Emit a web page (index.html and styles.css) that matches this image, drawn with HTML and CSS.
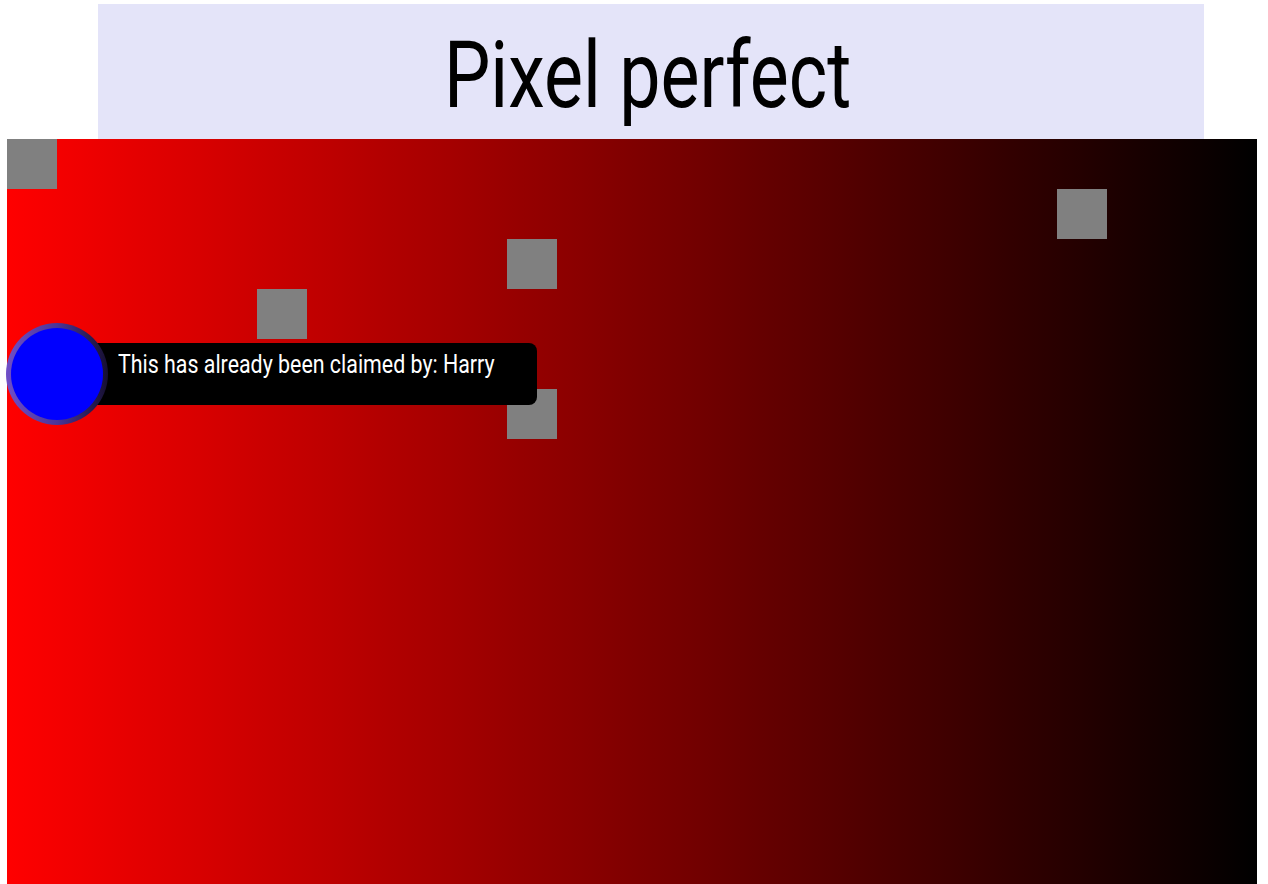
FILE: index.html
```html
<!DOCTYPE html>
<html lang="en">
<head>
<meta charset="utf-8">
<title>Pixel perfect</title>
<link rel="stylesheet" href="styles.css">
</head>
<body>
<div class="page">
  <header class="banner">
    <h1 class="title"><span class="title-text">Pixel perfect</span></h1>
  </header>
  <main class="board">
    <div class="cell" style="grid-column:1;grid-row:1"></div>
    <div class="cell" style="grid-column:22;grid-row:2"></div>
    <div class="cell" style="grid-column:11;grid-row:3"></div>
    <div class="cell" style="grid-column:6;grid-row:4"></div>
    <div class="cell" style="grid-column:11;grid-row:6"></div>
    <div class="tooltip"><span class="tooltip-text">This has already been claimed by: Harry</span></div>
    <div class="marker"><div class="marker-dot"></div></div>
  </main>
</div>
</body>
</html>
```
FILE: styles.css
```css
html, body {
  margin: 0;
  padding: 0;
  background: #ffffff;
}

.page {
  padding: 4px 0 0 7px;
  font-family: Roboto, "Liberation Sans", sans-serif;
}

.banner {
  margin-left: 91px;
  width: 1106px;
  height: 135px;
  background: #e4e4f9;
  display: flex;
  justify-content: center;
  align-items: flex-start;
  box-sizing: border-box;
  padding-top: 26px;
  padding-right: 6px;
}

.title {
  margin: 0;
  font-size: 92px;
  font-weight: 400;
  line-height: 1;
  color: #000;
}

.title-text {
  display: inline-block;
  transform: scaleX(0.8);
  transform-origin: center;
}

.board {
  position: relative;
  width: 1250px;
  height: 750px;
  display: grid;
  grid-template-columns: repeat(25, 50px);
  grid-template-rows: repeat(15, 50px);
  background: linear-gradient(to right, #ff0000, #000000);
}

.cell {
  background: #808080;
}

.tooltip {
  position: absolute;
  left: 50px;
  top: 204px;
  width: 480px;
  height: 62px;
  box-sizing: border-box;
  padding: 7px 0 0 61px;
  background: #000;
  border-radius: 8px;
  color: #fff;
  font-size: 25px;
  font-weight: 400;
  line-height: 30px;
  white-space: nowrap;
}

.tooltip-text {
  display: inline-block;
  transform: scaleX(0.855);
  transform-origin: left center;
}

.marker {
  position: absolute;
  left: -1px;
  top: 184px;
  width: 102px;
  height: 102px;
  box-sizing: border-box;
  padding: 5px;
  border-radius: 50%;
  background: linear-gradient(to right, #6f4fc8, #4a3598 50%, #160f30);
}

.marker-dot {
  width: 100%;
  height: 100%;
  border-radius: 50%;
  background: #0000ff;
}
```
